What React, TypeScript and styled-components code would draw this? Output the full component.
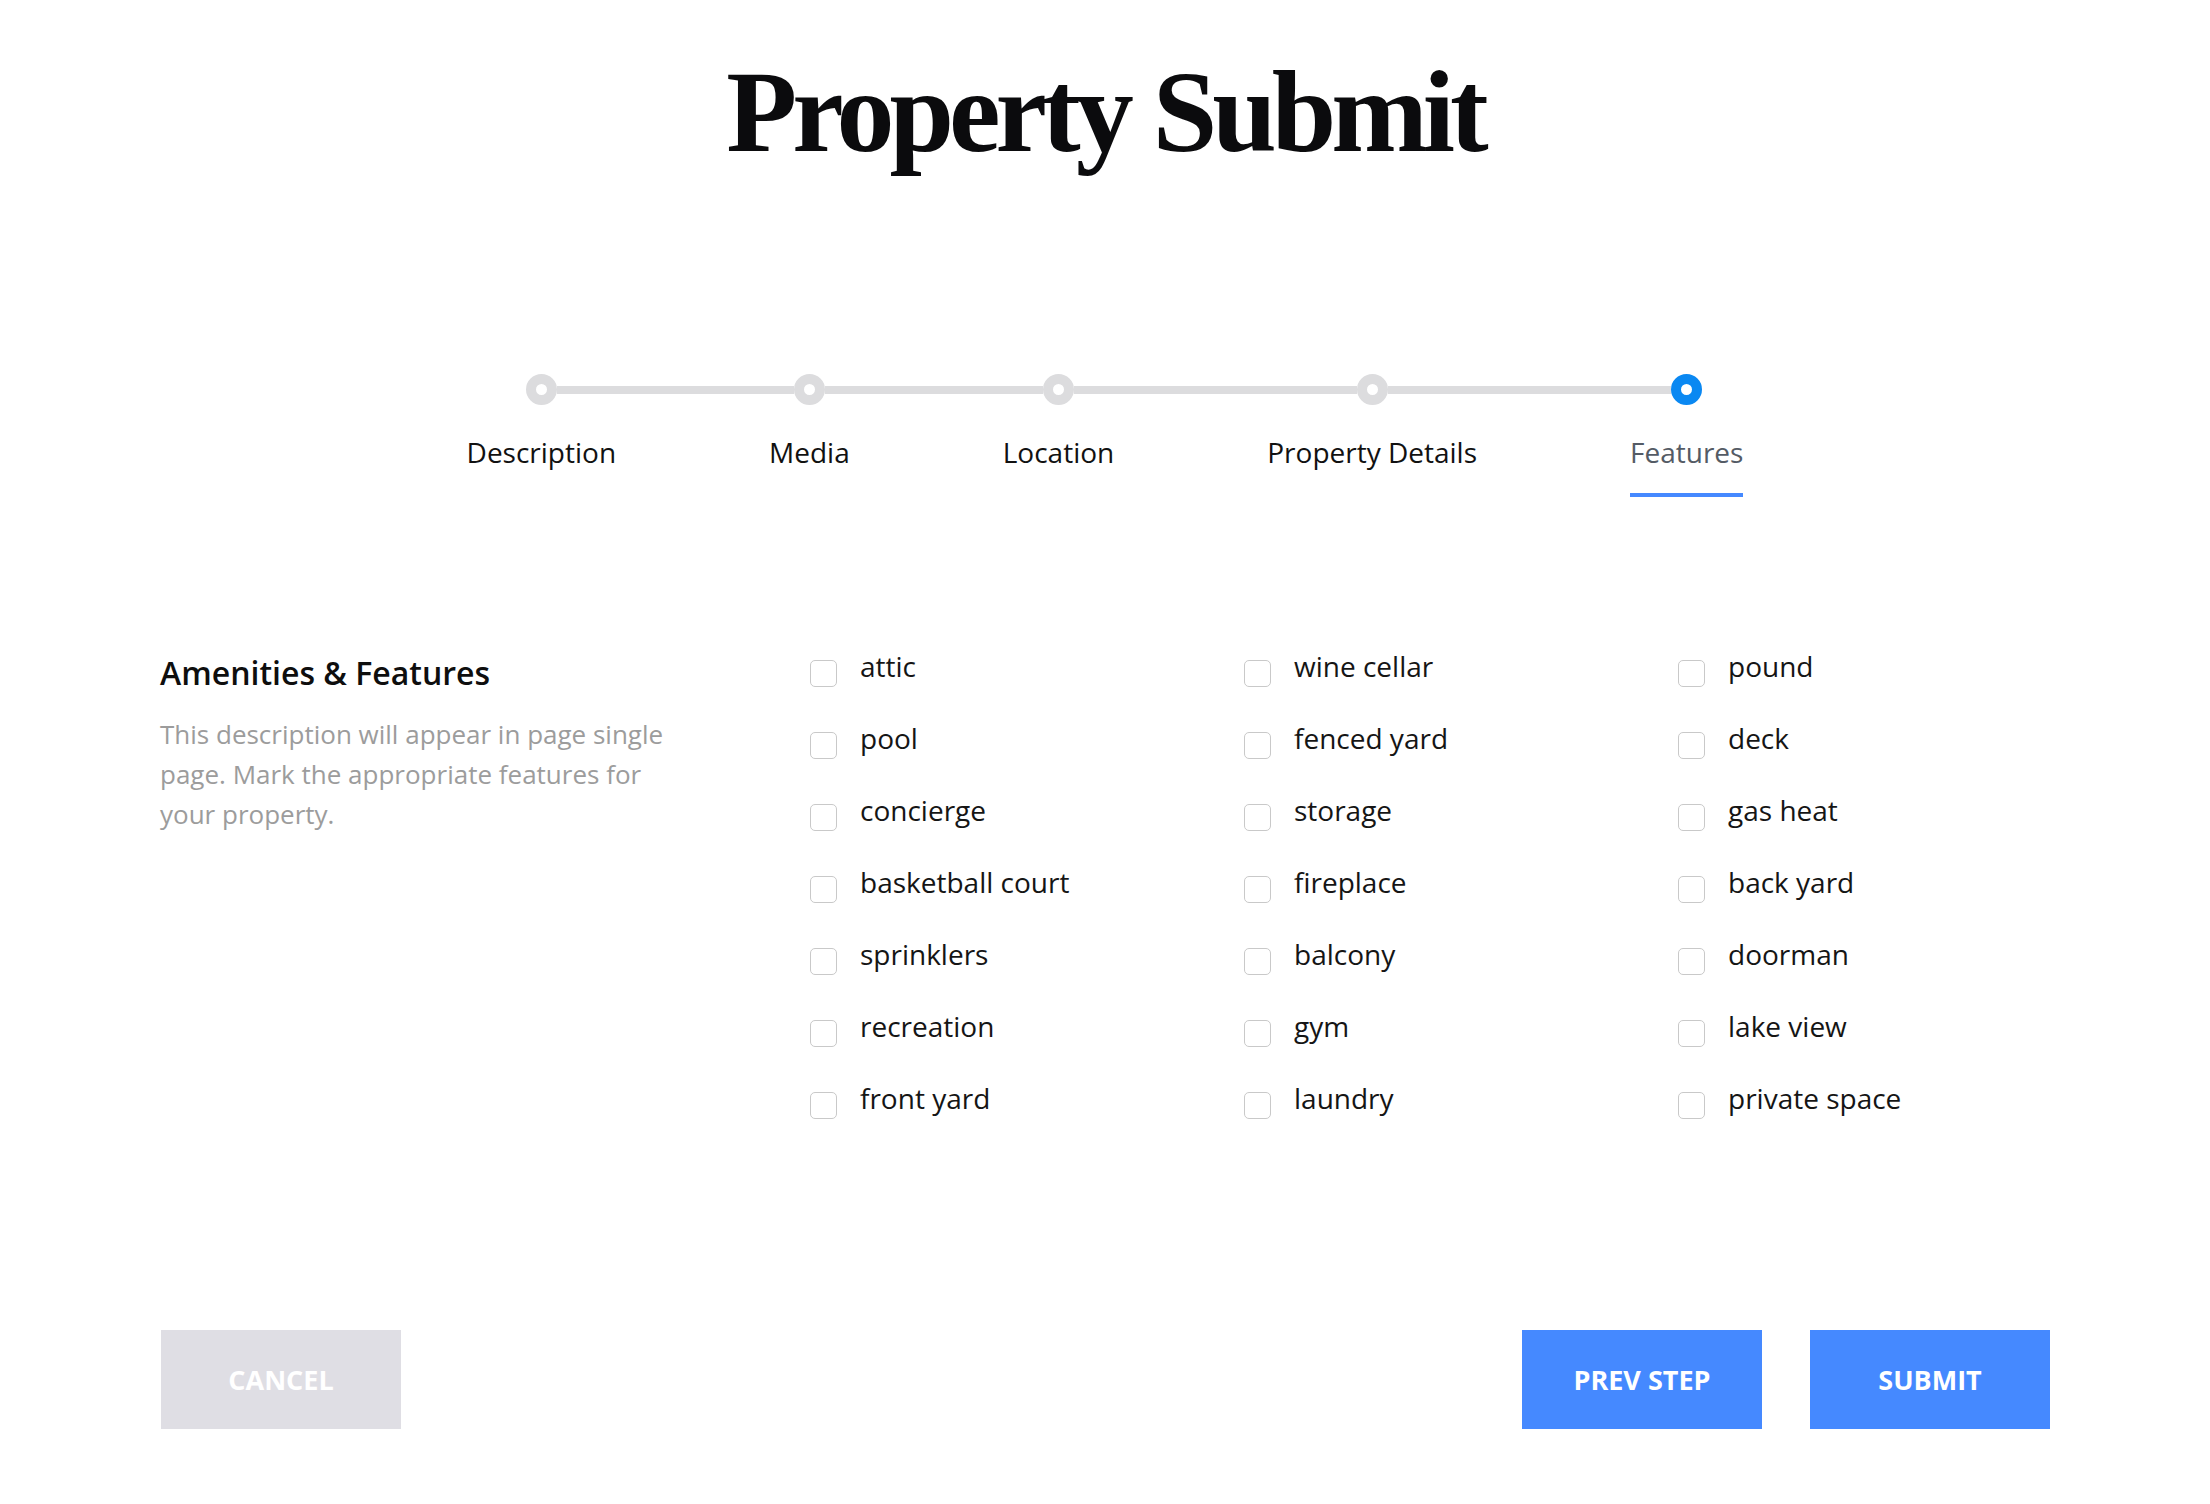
import React, { useState } from "react";
import styled, { createGlobalStyle } from "styled-components";

const GlobalStyle = createGlobalStyle`
  body {
    margin: 0;
    background: #ffffff;
    font-family: "Open Sans", "Noto Sans", sans-serif;
    color: #1c1c1c;
  }
`;

const steps = ["Description", "Media", "Location", "Property Details", "Features"];

const features = [
  ["attic", "wine cellar", "pound"],
  ["pool", "fenced yard", "deck"],
  ["concierge", "storage", "gas heat"],
  ["basketball court", "fireplace", "back yard"],
  ["sprinklers", "balcony", "doorman"],
  ["recreation", "gym", "lake view"],
  ["front yard", "laundry", "private space"],
];

export default function App() {
  const [checked, setChecked] = useState<Record<string, boolean>>({});
  const active = steps.length - 1;

  const toggle = (name: string) => {
    setChecked({ ...checked, [name]: !checked[name] });
  };

  // columns first so each grid column reads top to bottom
  const columns = [0, 1, 2].map((c) => features.map((row) => row[c]));

  return (
    <Page>
      <GlobalStyle />
      <Title>Property Submit</Title>

      <Stepper>
        {steps.map((step, i) => (
          <Step key={step}>
            <Track>
              <Segment $hidden={i === 0} />
              <Dot $active={i === active} />
              <Segment $hidden={i === steps.length - 1} />
            </Track>
            <StepLabel $active={i === active}>{step}</StepLabel>
          </Step>
        ))}
      </Stepper>

      <Section>
        <Intro>
          <Heading>Amenities &amp; Features</Heading>
          <Description>
            This description will appear in page single page. Mark the
            appropriate features for your property.
          </Description>
        </Intro>
        {columns.map((col, c) => (
          <Column key={c}>
            {col.map((name) => (
              <Option key={name} onClick={() => toggle(name)}>
                <Box $checked={!!checked[name]} />
                <OptionText>{name}</OptionText>
              </Option>
            ))}
          </Column>
        ))}
      </Section>

      <Actions>
        <Button $variant="muted">Cancel</Button>
        <ButtonGroup>
          <Button>Prev Step</Button>
          <Button>Submit</Button>
        </ButtonGroup>
      </Actions>
    </Page>
  );
}

const Page = styled.div`
  width: 1890px;
  margin: 0 auto;
  padding-bottom: 75px;
`;

const Title = styled.h1`
  margin: 54px 0 0;
  font-family: "Liberation Serif", "Times New Roman", serif;
  font-weight: 700;
  font-size: 116px;
  line-height: 1;
  letter-spacing: -5px;
  text-align: center;
  color: #0b0b0d;
`;

const Stepper = styled.div`
  display: flex;
  justify-content: center;
  margin-top: 204px;
`;

const Step = styled.div`
  display: flex;
  flex-direction: column;
  align-items: center;
  padding: 0 76.5px;
`;

const Track = styled.div`
  display: flex;
  align-items: center;
  align-self: stretch;
  margin: 0 -76.5px;
`;

const Segment = styled.div<{ $hidden?: boolean }>`
  flex: 1;
  height: 8px;
  background: ${(p) => (p.$hidden ? "transparent" : "#dcdcde")};
`;

const Dot = styled.div<{ $active?: boolean }>`
  width: 11px;
  height: 11px;
  border-radius: 50%;
  background: #ffffff;
  border: 10.5px solid ${(p) => (p.$active ? "#0a88f2" : "#dcdcde")};
  flex-shrink: 0;
`;

const StepLabel = styled.div<{ $active?: boolean }>`
  margin-top: 28px;
  padding-bottom: 22px;
  font-size: 28px;
  line-height: 38px;
  white-space: nowrap;
  color: ${(p) => (p.$active ? "#545b65" : "#111111")};
  border-bottom: 4px solid ${(p) => (p.$active ? "#4589ff" : "transparent")};
`;

const Section = styled.div`
  display: grid;
  grid-template-columns: 649px 434px 434px 1fr;
  margin-top: 150px;
`;

const Intro = styled.div`
  padding-top: 4px;
`;

const Heading = styled.h3`
  margin: 0;
  font-size: 32px;
  line-height: 44px;
  font-weight: 600;
  color: #0e0e0e;
`;

const Description = styled.p`
  margin: 19px 0 0;
  width: 520px;
  font-size: 26px;
  line-height: 40px;
  color: #9c9c9c;
`;

const Column = styled.div`
  display: flex;
  flex-direction: column;
  gap: 34px;
`;

const Option = styled.label`
  display: flex;
  align-items: flex-start;
  height: 38px;
  gap: 23px;
  cursor: pointer;
`;

const Box = styled.span<{ $checked?: boolean }>`
  box-sizing: border-box;
  width: 27px;
  height: 27px;
  margin-top: 13px;
  margin-left: 1px;
  border: 1.5px solid #c9c9c9;
  border-radius: 5px;
  background: ${(p) => (p.$checked ? "#4589ff" : "#ffffff")};
  flex-shrink: 0;
`;

const OptionText = styled.span`
  font-size: 28px;
  line-height: 38px;
  color: #151515;
`;

const Actions = styled.div`
  display: flex;
  justify-content: space-between;
  margin-top: 213px;
  padding-left: 1px;
`;

const ButtonGroup = styled.div`
  display: flex;
  gap: 48px;
`;

const Button = styled.button<{ $variant?: "muted" }>`
  width: 240px;
  height: 99px;
  border: 0;
  border-radius: 0;
  font-family: "Open Sans", "Noto Sans", sans-serif;
  font-weight: 700;
  font-size: 27px;
  text-transform: uppercase;
  color: #ffffff;
  background: ${(p) => (p.$variant === "muted" ? "#dfdee4" : "#4589ff")};
  cursor: pointer;
`;
